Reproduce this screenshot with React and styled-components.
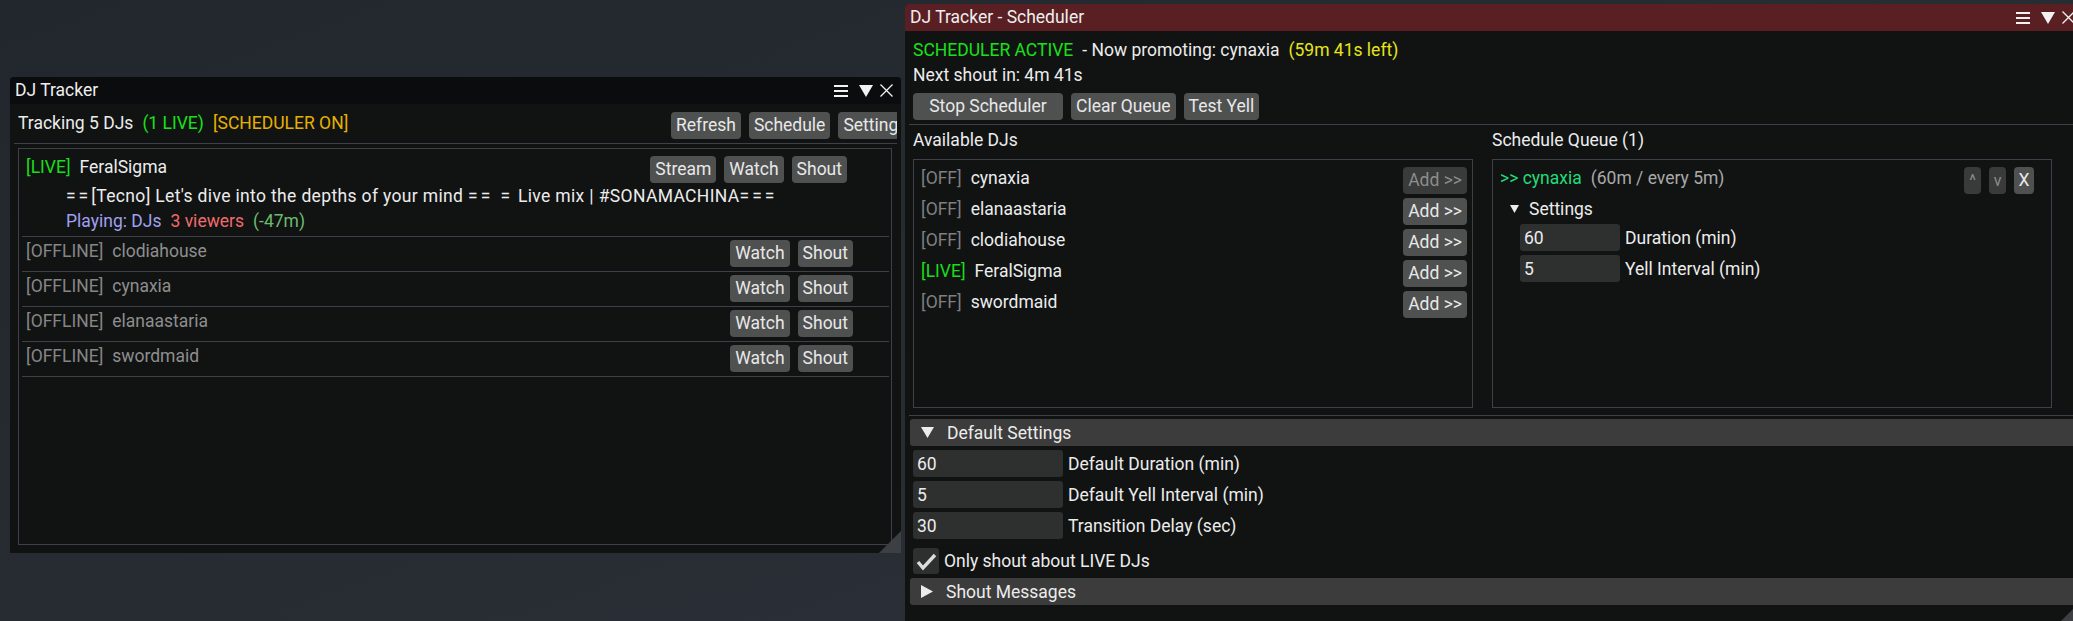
import React from 'react'
import styled, { createGlobalStyle } from 'styled-components'

const GlobalStyle = createGlobalStyle`
  html, body {
    margin: 0;
    padding: 0;
    background: #262b31;
  }
  body {
    font-family: Roboto, "Noto Sans", sans-serif;
    font-size: 17.5px;
    color: #ececec;
  }
  * { box-sizing: border-box; }
`

const Desktop = styled.div`
  position: relative;
  width: 2073px;
  height: 621px;
  overflow: hidden;
  background: linear-gradient(160deg, #22272d 0%, #282d34 55%, #2c323a 100%);
`

// windows sit on the desktop at their own coordinates
const Window = styled.div`
  position: absolute;
  left: ${(p) => p.$x}px;
  top: ${(p) => p.$y}px;
  width: ${(p) => p.$w}px;
  height: ${(p) => p.$h}px;
  display: flex;
  flex-direction: column;
  background: #111313;
  border-radius: 4px 4px 0 0;
  overflow: hidden;
`

const TitleBar = styled.div`
  flex: none;
  height: 27px;
  display: flex;
  align-items: center;
  padding: 0 8px 0 5px;
  background: ${(p) => p.$bg};
  color: #eeeeee;
  white-space: nowrap;
`

const TitleText = styled.span`
  flex: 1;
  line-height: 27px;
`

const Glyph = styled.svg`
  display: block;
  flex: none;
  margin-left: ${(p) => p.$gap || 0}px;
`

const Grip = styled.div`
  position: absolute;
  right: 0;
  bottom: 0;
  width: 22px;
  height: 22px;
  background: #3c3f43;
  clip-path: polygon(100% 0, 100% 100%, 0 100%);
`

const Body = styled.div`
  flex: 1;
  min-height: 0;
  display: flex;
  flex-direction: column;
  padding: 8px;
`

const Tone = styled.span`
  color: ${(p) => p.$c || 'inherit'};
  white-space: nowrap;
  line-height: 22px;
  letter-spacing: ${(p) => p.$track || 0}px;
`

// the "=" runs in stream titles render wide in the game font
const Equals = styled.span`
  letter-spacing: 3px;
`

const Button = styled.button`
  flex: none;
  height: 27px;
  width: ${(p) => (p.$w ? `${p.$w}px` : 'auto')};
  padding: 0 5px;
  border: none;
  border-radius: 4px;
  background: ${(p) => (p.$dim ? '#393a3a' : '#4f5151')};
  color: ${(p) => (p.$dim ? '#8d8d8d' : '#e8e8e8')};
  font: inherit;
  line-height: 27px;
  white-space: nowrap;
`

const Rule = styled.div`
  flex: none;
  height: 1px;
  background: #3f4049;
  margin: ${(p) => p.$m};
`

const Frame = styled.div`
  border: 1px solid #3f4049;
  padding: 7px;
`

/* ---------- tracker window ---------- */

const StatusRow = styled.div`
  flex: none;
  display: grid;
  grid-template-columns: 653px 1fr;
  height: 27px;
  margin-right: -4px;
  overflow: hidden;
`

const Inline = styled.div`
  display: flex;
  align-items: flex-start;
  gap: 9px;
`

const Actions = styled.div`
  display: flex;
  gap: 8px;
  margin-left: ${(p) => (p.$auto ? 'auto' : '0')};
  margin-right: ${(p) => p.$inset || 0}px;
`

const DjList = styled(Frame)`
  flex: 1;
  margin-right: 1px;
  display: flex;
  flex-direction: column;
`

const Entry = styled.div`
  margin: 0 -5px 0 -4px;
  padding: 0 5px 4px 4px;
  border-bottom: 1px solid #3f4049;

  & + & {
    padding-top: 3px;
  }
`

const EntryHead = styled.div`
  display: flex;
  align-items: flex-start;
  height: 27px;
  gap: 9px;
`

const Detail = styled.div`
  display: flex;
  gap: 9px;
  padding-left: 40px;
  margin-top: ${(p) => p.$top}px;
  line-height: 21px;

  & > span {
    line-height: 21px;
  }
`

function WindowIcons() {
  return (
    <>
      <Glyph width="14" height="12" viewBox="0 0 14 12">
        <rect x="0" y="0" width="14" height="2" fill="#f2f2f2" />
        <rect x="0" y="5" width="14" height="2" fill="#f2f2f2" />
        <rect x="0" y="10" width="14" height="2" fill="#f2f2f2" />
      </Glyph>
      <Glyph $gap={11} width="14" height="12" viewBox="0 0 14 12">
        <polygon points="0,0 14,0 7,12" fill="#f2f2f2" />
      </Glyph>
      <Glyph $gap={7} width="13" height="13" viewBox="0 0 13 13">
        <path d="M0.5 0.5 L12.5 12.5 M12.5 0.5 L0.5 12.5" stroke="#f2f2f2" strokeWidth="1.3" />
      </Glyph>
    </>
  )
}

const offline = ['clodiahouse', 'cynaxia', 'elanaastaria', 'swordmaid']

function TrackerWindow() {
  return (
    <Window $x={10} $y={77} $w={891} $h={476}>
      <TitleBar $bg="#0b0c0d">
        <TitleText>DJ Tracker</TitleText>
        <WindowIcons />
      </TitleBar>
      <Body>
        <StatusRow>
          <Inline>
            <Tone>Tracking 5 DJs</Tone>
            <Tone $c="#19e119">(1 LIVE)</Tone>
            <Tone $c="#e6b000">[SCHEDULER ON]</Tone>
          </Inline>
          <Actions>
            <Button>Refresh</Button>
            <Button>Schedule</Button>
            <Button>Settings</Button>
          </Actions>
        </StatusRow>
        <Rule $m="4px -4px 4px" />
        <DjList>
          <Entry>
            <EntryHead>
              <Tone $c="#19dd19">[LIVE]</Tone>
              <Tone>FeralSigma</Tone>
              <Actions $auto $inset={37}>
                <Button>Stream</Button>
                <Button>Watch</Button>
                <Button>Shout</Button>
              </Actions>
            </EntryHead>
            <Detail $top={3}>
              <Tone $track={0.35}>
                <Equals>==</Equals>[Tecno] Let's dive into the depths of your mind <Equals>== =</Equals> Live mix | #SONAMACHINA<Equals>===</Equals>
              </Tone>
            </Detail>
            <Detail $top={4}>
              <Tone $c="#a0a0f0">Playing: DJs</Tone>
              <Tone $c="#ef6b6b">3 viewers</Tone>
              <Tone $c="#6dbb6d">(-47m)</Tone>
            </Detail>
          </Entry>
          {offline.map((name) => (
            <Entry key={name}>
              <EntryHead>
                <Tone $c="#868686">[OFFLINE]</Tone>
                <Tone $c="#8e8e8e">{name}</Tone>
                <Actions $auto $inset={31}>
                  <Button>Watch</Button>
                  <Button>Shout</Button>
                </Actions>
              </EntryHead>
            </Entry>
          ))}
        </DjList>
      </Body>
      <Grip />
    </Window>
  )
}

/* ---------- scheduler window ---------- */

const Line = styled.div`
  flex: none;
  display: flex;
  gap: 9px;
  height: 22px;
  margin-top: ${(p) => p.$top || 0}px;
`

const Toolbar = styled.div`
  flex: none;
  display: flex;
  gap: 8px;
  margin-top: 7px;
`

const Columns = styled.div`
  flex: none;
  display: grid;
  grid-template-columns: 560px 560px;
  grid-template-rows: 22px 249px;
  column-gap: 19px;
  row-gap: 8px;
  margin-top: 4px;
`

const PickRow = styled.div`
  display: flex;
  align-items: flex-start;
  gap: 9px;
  height: 27px;

  & + & {
    margin-top: 4px;
  }

  & > button {
    margin-left: auto;
    margin-right: -2px;
  }
`

const QueueHead = styled.div`
  display: flex;
  align-items: flex-start;
  gap: 9px;
  height: 27px;
`

const MiniButton = styled(Button)`
  width: ${(p) => p.$w}px;
  padding: 0;
  text-align: center;
  font-size: ${(p) => (p.$big ? '17.5px' : '16px')};
`

const TreeLine = styled.div`
  display: flex;
  align-items: center;
  gap: 10px;
  height: 22px;
  margin-top: 4px;
  padding-left: 10px;
`

const FieldRow = styled.div`
  flex: none;
  display: flex;
  align-items: center;
  gap: 5px;
  margin-top: ${(p) => p.$top}px;
  padding-left: ${(p) => p.$indent || 0}px;
  height: 27px;
`

const Field = styled.input`
  flex: none;
  width: ${(p) => p.$w}px;
  height: 27px;
  padding: 0 4px;
  border: none;
  border-radius: 3px;
  outline: none;
  background: #2e2f2f;
  color: #ececec;
  font: inherit;
`

const Header = styled.div`
  flex: none;
  display: flex;
  align-items: center;
  gap: 13px;
  height: 27px;
  margin: ${(p) => p.$top}px -8px 0 -3px;
  padding-left: 11px;
  border-radius: 3px 0 0 3px;
  background: #3c3c3c;
  white-space: nowrap;
`

const Check = styled.div`
  flex: none;
  width: 26px;
  height: 26px;
  border-radius: 3px;
  background: #2e2f2f;
  display: flex;
  align-items: center;
  justify-content: center;
`

const available = [
  { tag: 'OFF', name: 'cynaxia', dim: true },
  { tag: 'OFF', name: 'elanaastaria' },
  { tag: 'OFF', name: 'clodiahouse' },
  { tag: 'LIVE', name: 'FeralSigma' },
  { tag: 'OFF', name: 'swordmaid' },
]

function SchedulerWindow() {
  return (
    <Window $x={905} $y={4} $w={1178} $h={617}>
      <TitleBar $bg="#591f22">
        <TitleText>DJ Tracker - Scheduler</TitleText>
        <WindowIcons />
      </TitleBar>
      <Body>
        <Line>
          <Tone $c="#19e119">SCHEDULER ACTIVE</Tone>
          <Tone>- Now promoting: cynaxia</Tone>
          <Tone $c="#e6e619">(59m 41s left)</Tone>
        </Line>
        <Line $top={3}>
          <Tone>Next shout in: 4m 41s</Tone>
        </Line>
        <Toolbar>
          <Button $w={150}>Stop Scheduler</Button>
          <Button>Clear Queue</Button>
          <Button>Test Yell</Button>
        </Toolbar>
        <Rule $m="4px -8px 0 -4px" />
        <Columns>
          <Tone>Available DJs</Tone>
          <Tone>Schedule Queue (1)</Tone>
          <Frame>
            {available.map((dj) => (
              <PickRow key={dj.name}>
                <Tone $c={dj.tag === 'LIVE' ? '#19dd19' : '#7f7f7f'}>[{dj.tag}]</Tone>
                <Tone>{dj.name}</Tone>
                <Button $dim={dj.dim}>Add &gt;&gt;</Button>
              </PickRow>
            ))}
          </Frame>
          <Frame>
            <QueueHead>
              <Tone $c="#22dd77">&gt;&gt; cynaxia</Tone>
              <Tone $c="#a9a9a9">(60m / every 5m)</Tone>
              <Actions $auto $inset={10}>
                <MiniButton $dim $w={17}>^</MiniButton>
                <MiniButton $dim $w={17}>v</MiniButton>
                <MiniButton $big $w={20}>X</MiniButton>
              </Actions>
            </QueueHead>
            <TreeLine>
              <Glyph width="9" height="8" viewBox="0 0 9 8">
                <polygon points="0,0 9,0 4.5,8" fill="#ececec" />
              </Glyph>
              <Tone>Settings</Tone>
            </TreeLine>
            <FieldRow $top={4} $indent={20}>
              <Field $w={100} readOnly value="60" />
              <Tone>Duration (min)</Tone>
            </FieldRow>
            <FieldRow $top={4} $indent={20}>
              <Field $w={100} readOnly value="5" />
              <Tone>Yell Interval (min)</Tone>
            </FieldRow>
          </Frame>
        </Columns>
        <Rule $m="7px -8px 0 -4px" />
        <Header $top={3}>
          <Glyph width="13" height="11" viewBox="0 0 13 11">
            <polygon points="0,0 13,0 6.5,11" fill="#ececec" />
          </Glyph>
          <Tone>Default Settings</Tone>
        </Header>
        <FieldRow $top={4}>
          <Field $w={150} readOnly value="60" />
          <Tone>Default Duration (min)</Tone>
        </FieldRow>
        <FieldRow $top={4}>
          <Field $w={150} readOnly value="5" />
          <Tone>Default Yell Interval (min)</Tone>
        </FieldRow>
        <FieldRow $top={4}>
          <Field $w={150} readOnly value="30" />
          <Tone>Transition Delay (sec)</Tone>
        </FieldRow>
        <FieldRow $top={8}>
          <Check>
            <svg width="26" height="26" viewBox="0 0 26 26">
              <path d="M5 14 L10 20 L22 7" fill="none" stroke="#dcdcdc" strokeWidth="3.4" />
            </svg>
          </Check>
          <Tone>Only shout about LIVE DJs</Tone>
        </FieldRow>
        <Header $top={4}>
          <Glyph width="12" height="13" viewBox="0 0 12 13">
            <polygon points="0,0 12,6.5 0,13" fill="#ececec" />
          </Glyph>
          <Tone>Shout Messages</Tone>
        </Header>
      </Body>
      <Grip />
    </Window>
  )
}

export default function App() {
  return (
    <>
      <GlobalStyle />
      <Desktop>
        <TrackerWindow />
        <SchedulerWindow />
      </Desktop>
    </>
  )
}
